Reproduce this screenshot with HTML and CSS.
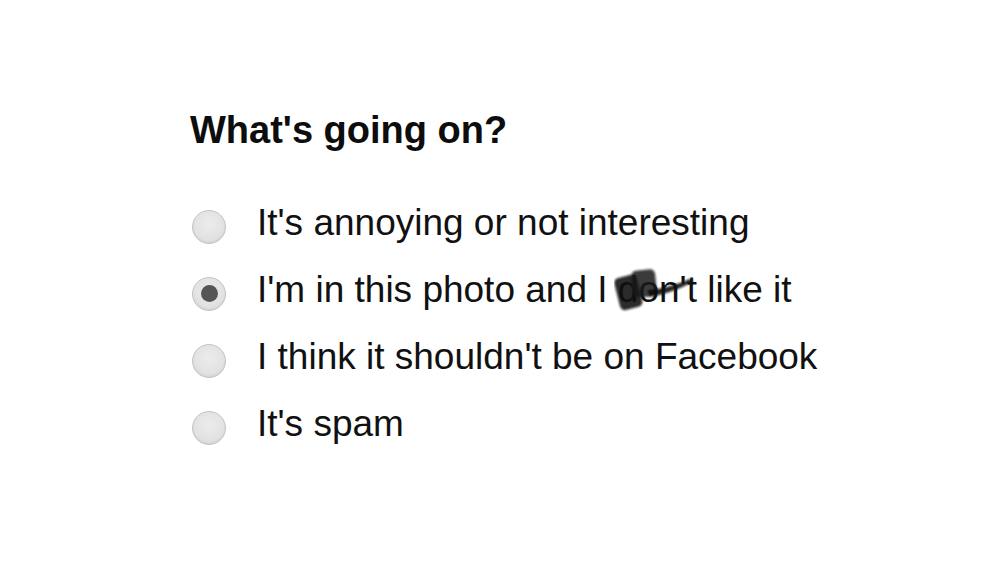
FILE: index.html
```html
<!DOCTYPE html>
<html>
<head>
<meta charset="utf-8">
<link rel="stylesheet" href="styles.css">
</head>
<body>
<div class="dialog">
  <h1 class="title">What's going on?</h1>
  <div class="options">
    <div class="option">
      <span class="radio"></span>
      <span class="label">It's annoying or not interesting</span>
    </div>
    <div class="option">
      <span class="radio checked"></span>
      <span class="label">I'm in this photo and I <span class="scribbled">don<svg class="blob" viewBox="0 0 84 50" width="84" height="50" aria-hidden="true">
        <defs><filter id="bl" x="-20%" y="-20%" width="140%" height="140%"><feGaussianBlur stdDeviation="1.1"/></filter></defs>
        <g filter="url(#bl)">
          <rect x="3" y="10" width="23" height="33" rx="5" fill="#121212" opacity="0.88" transform="rotate(-14 14 27)"/>
          <rect x="18" y="4" width="24" height="27" rx="5" fill="#181818" opacity="0.85" transform="rotate(-6 30 17)"/>
          <path d="M34 24 C48 23 62 19 78 12 L79 16 C63 24 49 29 35 31 Z" fill="#111111" opacity="0.9"/>
        </g>
      </svg></span>'t like it</span>
    </div>
    <div class="option">
      <span class="radio"></span>
      <span class="label">I think it shouldn't be on Facebook</span>
    </div>
    <div class="option">
      <span class="radio"></span>
      <span class="label">It's spam</span>
    </div>
  </div>
</div>
</body>
</html>
```

FILE: styles.css
```css
html, body {
  margin: 0;
  padding: 0;
  background: #ffffff;
}

body {
  font-family: "Liberation Sans", Arial, sans-serif;
  color: #111111;
  width: 1000px;
  height: 563px;
  overflow: hidden;
}

.dialog {
  padding: 108px 0 0 190px;
}

.title {
  margin: 0;
  font-size: 38px;
  line-height: 44px;
  font-weight: bold;
  color: #0d0d0d;
}

.options {
  margin-top: 37px;
  display: flex;
  flex-direction: column;
}

.option {
  display: flex;
  align-items: center;
  height: 67px;
}

.radio {
  flex: none;
  box-sizing: border-box;
  width: 34px;
  height: 34px;
  margin: 8px 31px 0 2px;
  border-radius: 50%;
  border: 1px solid #c4c4c4;
  background: radial-gradient(circle at 50% 40%, #ececec 0%, #e2e2e2 60%, #d6d6d6 100%);
  box-shadow: inset 0 -1px 2px rgba(0, 0, 0, 0.06);
  display: flex;
  align-items: center;
  justify-content: center;
}

.radio.checked::after {
  content: "";
  width: 17px;
  height: 17px;
  border-radius: 50%;
  background: #555555;
}

.label {
  font-size: 37px;
  line-height: 67px;
  white-space: nowrap;
}

.scribbled {
  position: relative;
}

.blob {
  position: absolute;
  left: -4px;
  top: -3px;
  pointer-events: none;
}
```
